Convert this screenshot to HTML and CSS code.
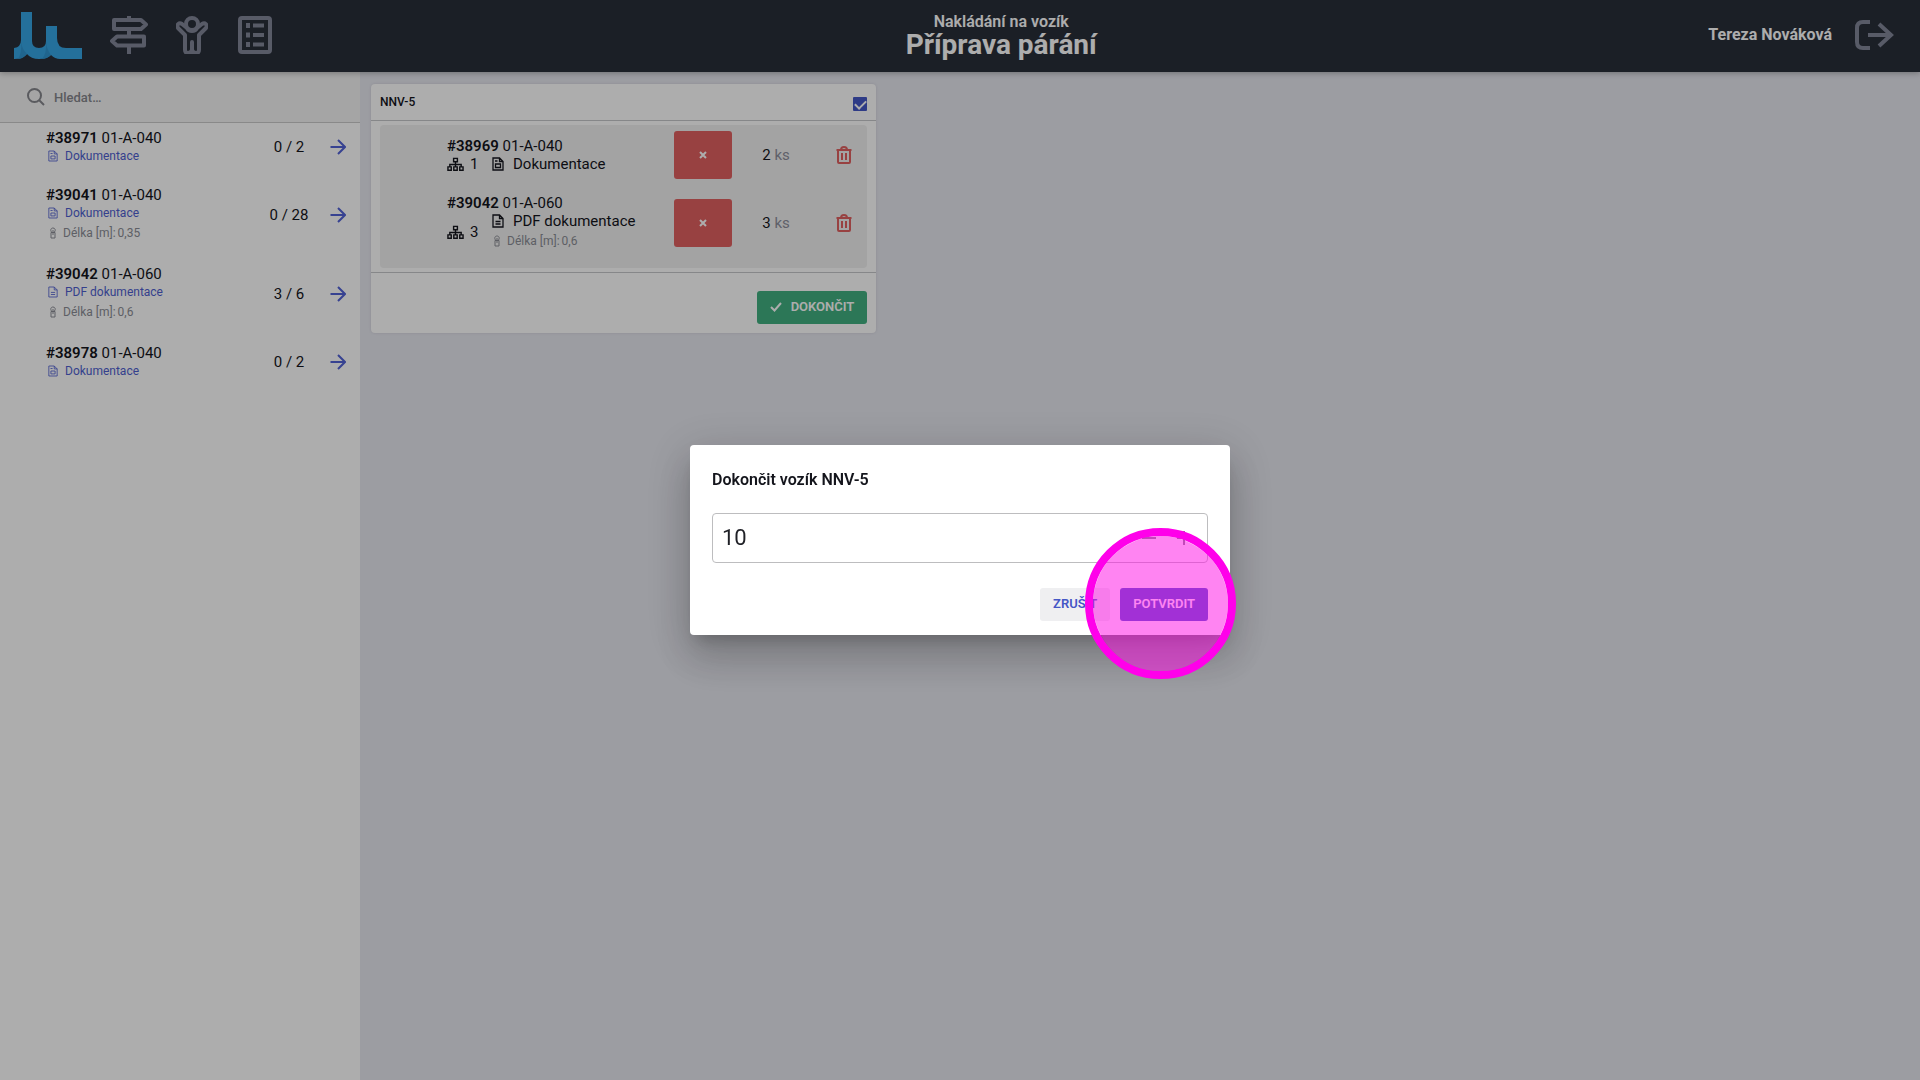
FILE: index.html
```html
<!DOCTYPE html>
<html lang="cs">
<head>
    <meta charset="UTF-8">
    <meta name="viewport" content="width=device-width, initial-scale=1.0">
    <title>Příprava párání</title>

    <link rel="stylesheet" href="styles.css">
</head>
<body>
    <!-- shared icons -->
    <svg class="sprite" aria-hidden="true">
        <symbol id="i-form" viewBox="0 0 12 14">
            <path d="M1 1h6.500L11 4.500V13H1zM7.500 1v3.500H11M3 4h2.500M3.500 7h5v3.500h-5z"/>
        </symbol>
        <symbol id="i-pdf" viewBox="0 0 12 14">
            <path d="M1 1h6.500L11 4.500V13H1zM7.500 1v3.500H11M3.500 7.500h5M3.500 10h5"/>
        </symbol>
        <symbol id="i-length" viewBox="0 0 8 12">
            <path d="M2.500 5C1 3 2 1 4 1s3 2 1.500 4M2 5.500h4V11H2zM4 3v5"/>
        </symbol>
        <symbol id="i-tree" viewBox="0 0 18 15">
            <path d="M7 1h4v3.500H7zM9 4.500V10M3 10V7.500h12V10M1 10h3.500v3.500H1zM7.200 10h3.600v3.500H7.200zM13.500 10H17v3.500h-3.500z"/>
        </symbol>
        <symbol id="i-arrow" viewBox="0 0 16 16">
            <path d="M0.500 8h14M8 1l7 7-7 7"/>
        </symbol>
        <symbol id="i-trash" viewBox="0 0 16 18">
            <path d="M0.500 4h15M5 4c0-4 6-4 6 0M2 4v12q0 1 1 1h10q1 0 1-1V4M6 7v7M10 7v7"/>
        </symbol>
        <symbol id="i-check" viewBox="0 0 12 10">
            <path d="M1 5l3.500 3.500L11 1"/>
        </symbol>
    </svg>

    <header class="topbar">
        <nav class="topbar__nav">
            <a class="topbar__logo" href="#" aria-label="Domů">
                <svg width="68" height="47" viewBox="0 0 68 47">
                    <path class="logo-base" d="M7 0h11v29q0 7 7 7t7-7V14h11v12q0 10 9 10h16v11H46q-5 0-9-4-4 4-12 4-8 0-12-5-4 5-13 5V36q7-1 7-8z"/>
                    <path class="logo-shade" d="M7 30q1 7 6 12-4 5-9 5 4-6 3-17zM32 30q1 8 5 13-4 4-9 4 5-6 4-17z"/>
                </svg>
            </a>
            <a class="topbar__item" href="#" aria-label="Rozcestník">
                <svg width="38" height="38" viewBox="0 0 38 38">
                    <path d="M4 4h27l5 4.500-5 4.500H4zM34 20.500H7L2 25l5 4.500h27zM19 0v4M19 13v7M19 30v8"/>
                </svg>
            </a>
            <a class="topbar__item" href="#" aria-label="Pracovník">
                <svg width="32" height="38" viewBox="0 0 32 38">
                    <circle cx="16" cy="8" r="6"/>
                    <path d="M11 12L6 8c-3-2-6 1-4 4l7 7v15q0 3 3 3t4-3v-8 8q1 3 4 3t3-3V19l7-7c2-3-1-6-4-4l-5 4c-2 4-8 4-10 0"/>
                </svg>
            </a>
            <a class="topbar__item" href="#" aria-label="Seznam">
                <svg width="34" height="38" viewBox="0 0 34 38">
                    <rect x="2" y="2" width="30" height="34" rx="2"/>
                    <path d="M15 9.500h11M15 19h11M15 28.500h11"/>
                    <path class="dots" d="M8 9.500h4M8 19h4M8 28.500h4"/>
                </svg>
            </a>
        </nav>
        <div class="topbar__title">
            <p>Nakládání na vozík</p>
            <h1>Příprava párání</h1>
        </div>
        <div class="topbar__user">
            <span>Tereza Nováková</span>
            <button class="topbar__logout" aria-label="Odhlásit">
                <svg width="39" height="30" viewBox="0 0 39 30">
                    <path d="M15 2H8Q2 2 2 8v14q0 6 6 6h7M13 15h23M24 4l12 11-12 11"/>
                </svg>
            </button>
        </div>
    </header>

    <div class="layout">
        <aside class="sidebar">
            <label class="search">
                <svg width="18" height="18" viewBox="0 0 18 18"><circle cx="7.500" cy="7.500" r="6.500"/><path d="M12 12l5 5"/></svg>
                <input type="text" placeholder="Hledat…" aria-label="Hledat">
            </label>
            <ul class="orders">
                <li class="order">
                    <div>
                        <p class="name"><b>#38971</b> 01-A-040</p>
                        <a class="doc" href="#"><svg><use href="#i-form"/></svg>Dokumentace</a>
                    </div>
                    <span class="order__count">0 / 2</span>
                    <button class="order__go" aria-label="Přidat"><svg><use href="#i-arrow"/></svg></button>
                </li>
                <li class="order">
                    <div>
                        <p class="name"><b>#39041</b> 01-A-040</p>
                        <a class="doc" href="#"><svg><use href="#i-form"/></svg>Dokumentace</a>
                        <p class="length"><svg><use href="#i-length"/></svg>Délka [m]: <span>0,35</span></p>
                    </div>
                    <span class="order__count">0 / 28</span>
                    <button class="order__go" aria-label="Přidat"><svg><use href="#i-arrow"/></svg></button>
                </li>
                <li class="order">
                    <div>
                        <p class="name"><b>#39042</b> 01-A-060</p>
                        <a class="doc" href="#"><svg><use href="#i-pdf"/></svg>PDF dokumentace</a>
                        <p class="length"><svg><use href="#i-length"/></svg>Délka [m]: <span>0,6</span></p>
                    </div>
                    <span class="order__count">3 / 6</span>
                    <button class="order__go" aria-label="Přidat"><svg><use href="#i-arrow"/></svg></button>
                </li>
                <li class="order">
                    <div>
                        <p class="name"><b>#38978</b> 01-A-040</p>
                        <a class="doc" href="#"><svg><use href="#i-form"/></svg>Dokumentace</a>
                    </div>
                    <span class="order__count">0 / 2</span>
                    <button class="order__go" aria-label="Přidat"><svg><use href="#i-arrow"/></svg></button>
                </li>
            </ul>
        </aside>

        <main class="carts">
            <section class="cart">
                <div class="cart__head">
                    <label for="cart5">NNV-5</label>
                    <input type="checkbox" id="cart5" checked>
                </div>
                <div class="cart__body">
                    <ul class="cart__list">
                        <li class="piece">
                            <div>
                                <p class="name"><b>#38969</b> 01-A-040</p>
                                <div class="piece__info">
                                    <span class="piece__tree"><svg><use href="#i-tree"/></svg>1</span>
                                    <div>
                                        <a class="doc doc--big" href="#"><svg><use href="#i-form"/></svg>Dokumentace</a>
                                    </div>
                                </div>
                            </div>
                            <button class="piece__x" aria-label="Zrušit kus"><svg width="8" height="8" viewBox="0 0 8 8"><path d="M1 1l6 6M7 1l-6 6"/></svg></button>
                            <span class="piece__count">2 <small>ks</small></span>
                            <button class="piece__trash" aria-label="Smazat"><svg><use href="#i-trash"/></svg></button>
                        </li>
                        <li class="piece">
                            <div>
                                <p class="name"><b>#39042</b> 01-A-060</p>
                                <div class="piece__info">
                                    <span class="piece__tree"><svg><use href="#i-tree"/></svg>3</span>
                                    <div>
                                        <a class="doc doc--big" href="#"><svg><use href="#i-pdf"/></svg>PDF dokumentace</a>
                                        <p class="length"><svg><use href="#i-length"/></svg>Délka [m]: <span>0,6</span></p>
                                    </div>
                                </div>
                            </div>
                            <button class="piece__x" aria-label="Zrušit kus"><svg width="8" height="8" viewBox="0 0 8 8"><path d="M1 1l6 6M7 1l-6 6"/></svg></button>
                            <span class="piece__count">3 <small>ks</small></span>
                            <button class="piece__trash" aria-label="Smazat"><svg><use href="#i-trash"/></svg></button>
                        </li>
                    </ul>
                </div>
                <div class="cart__foot">
                    <button class="btn btn--green"><svg><use href="#i-check"/></svg>Dokončit</button>
                </div>
            </section>
        </main>
    </div>

    <div class="overlay">
        <form class="dialog" role="dialog" aria-labelledby="dialog-title">
            <h2 id="dialog-title">Dokončit vozík NNV-5</h2>
            <div class="stepper">
                <input type="text" id="count" value="10" inputmode="numeric" aria-label="Počet">
                <button type="button" id="minus" aria-label="Ubrat"><svg width="14" height="14" viewBox="0 0 14 14"><path d="M0 7h14"/></svg></button>
                <button type="button" id="plus" aria-label="Přidat"><svg width="14" height="14" viewBox="0 0 14 14"><path d="M0 7h14M7 0v14"/></svg></button>
            </div>
            <div class="dialog__actions">
                <button type="button" class="btn btn--light">Zrušit</button>
                <button type="button" class="btn btn--blue">Potvrdit</button>
            </div>
            <span class="pointer"></span>
        </form>
    </div>

    <script>
        let count = document.getElementById("count");

        document.getElementById("minus").addEventListener("click", () => {
            count.value = Math.max(0, parseInt(count.value, 10) - 1);
        });
        document.getElementById("plus").addEventListener("click", () => {
            count.value = parseInt(count.value, 10) + 1;
        });
    </script>
</body>
</html>
```
FILE: styles.css
```css
* {
    box-sizing: border-box;
}

body {
    margin: 0;
    min-height: 100vh;
    display: flex;
    flex-direction: column;
    background-color: #e6e7ef;
    color: #14151c;
    font-family: Roboto, Arial, sans-serif;
    font-size: 15px;
    line-height: 18px;
}

p, h1, h2, ul {
    margin: 0;
    padding: 0;
}

ul {
    list-style: none;
}

b {
    font-weight: 600;
}

a {
    text-decoration: none;
}

button {
    padding: 0;
    border: none;
    background: none;
    font-family: inherit;
    cursor: pointer;
}

svg {
    display: block;
    flex: none;
    fill: none;
    stroke: currentColor;
}

.sprite {
    display: none;
}

/* top bar */
.topbar {
    height: 72px;
    padding: 0 26px 2px 14px;
    display: flex;
    align-items: center;
    justify-content: space-between;
    background-color: #282e39;
    color: white;
    box-shadow: 0 1px 6px rgba(0, 0, 0, 0.3);
    position: relative;
}

.topbar__nav {
    display: flex;
    align-items: center;
    margin-right: 8px;
}

.topbar__logo {
    margin-right: 15px;
}

.topbar__logo svg {
    stroke: none;
}

.logo-base {
    fill: #36a5e5;
}

.logo-shade {
    fill: #3096d1;
}

.topbar__item {
    width: 63px;
    display: flex;
    justify-content: center;
    color: #828698;
}

.topbar__item svg {
    stroke-width: 4;
    stroke-linejoin: round;
}

.topbar__item .dots {
    stroke-width: 5;
}

.topbar__title {
    padding-top: 2px;
    text-align: center;
}

.topbar__title p {
    font-size: 16px;
    font-weight: 600;
    line-height: 18px;
}

.topbar__title h1 {
    font-size: 28px;
    font-weight: 700;
    line-height: 28px;
}

.topbar__user {
    display: flex;
    align-items: center;
    gap: 23px;
    font-size: 16px;
    font-weight: 700;
}

.topbar__logout {
    color: #828698;
}

.topbar__logout svg {
    stroke-width: 4;
}

/* left column */
.layout {
    flex: 1;
    display: flex;
}

.sidebar {
    width: 360px;
    background-color: white;
}

.search {
    height: 51px;
    padding-left: 27px;
    display: flex;
    align-items: center;
    gap: 9px;
    background-color: #f3f3f3;
    border-bottom: 1px solid #cacaca;
    color: #85868c;
}

.search svg {
    stroke-width: 2;
}

.search input {
    flex: 1;
    min-width: 0;
    padding: 0;
    border: none;
    outline: none;
    background: none;
    font-family: inherit;
    font-size: 13px;
    font-weight: 500;
}

.search input::placeholder {
    color: #85868c;
    opacity: 1;
}

.orders {
    padding: 6px 14px 0 46px;
    display: flex;
    flex-direction: column;
    gap: 21px;
}

.order {
    display: grid;
    grid-template-columns: 1fr 74px 20px;
    align-items: center;
}

.order__count {
    text-align: center;
}

.order__go {
    display: flex;
    justify-content: flex-end;
    color: #5162d6;
}

.order__go svg {
    width: 16px;
    height: 16px;
    stroke-width: 2;
}

.doc {
    display: flex;
    align-items: center;
    gap: 7px;
    padding-left: 2px;
    color: #4f5fd0;
    font-size: 12px;
}

.doc svg {
    width: 10px;
    height: 12px;
}

.doc--big {
    gap: 9px;
    padding-left: 0;
    color: inherit;
    font-size: 15px;
}

.doc--big svg {
    width: 12px;
    height: 14px;
    stroke-width: 1.3;
}

.length {
    display: flex;
    align-items: center;
    padding-left: 3px;
    color: #8b8d95;
    font-size: 12px;
    line-height: 22px;
}

.length svg {
    width: 8px;
    height: 12px;
    margin-right: 6px;
}

.length span {
    margin-left: 2px;
}

.doc--big + .length {
    padding-left: 1px;
}

/* carts */
.carts {
    flex: 1;
    padding: 12px 11px;
    display: grid;
    grid-template-columns: repeat(3, 1fr);
    gap: 11px;
    align-items: start;
}

.cart {
    background-color: white;
    border-radius: 4px;
    box-shadow: 0 0 3px rgba(0, 0, 0, 0.1);
}

.cart__head {
    height: 36px;
    padding: 0 9px;
    display: flex;
    align-items: center;
    justify-content: space-between;
    font-size: 12px;
    font-weight: 500;
}

.cart__head input {
    appearance: none;
    width: 14px;
    height: 14px;
    margin: 4px 0 0;
    display: grid;
    place-items: center;
    border-radius: 1px;
    background-color: #4557c6;
}

.cart__head input:checked::before {
    content: "";
    width: 9px;
    height: 5px;
    border-left: 2px solid white;
    border-bottom: 2px solid white;
    transform: translateY(-1px) rotate(-45deg);
}

.cart__body {
    padding: 4px 9px;
    border-top: 1px solid #c6c7cb;
    border-bottom: 1px solid #c6c7cb;
}

.cart__list {
    padding: 6px 0 16px 67px;
    display: flex;
    flex-direction: column;
    gap: 15px;
    background-color: #f0f0f0;
    border-radius: 4px;
}

.piece {
    display: grid;
    grid-template-columns: 1fr 58px 90px 45px;
    align-items: center;
}

.piece__info {
    display: flex;
    align-items: center;
}

.piece__tree {
    width: 45px;
    display: flex;
    align-items: center;
    gap: 6px;
}

.piece__tree svg {
    width: 17px;
    height: 15px;
    stroke-width: 1.5;
}

.piece__x {
    height: 48px;
    display: grid;
    place-items: center;
    border-radius: 3px;
    background-color: #e06161;
    color: white;
}

.piece__x svg {
    stroke-width: 2;
}

.piece__count {
    padding-left: 30px;
}

.piece__count small {
    color: #8d8e9c;
    font-size: 15px;
}

.piece__trash {
    padding-left: 14px;
    color: #e06161;
}

.piece__trash svg {
    width: 16px;
    height: 18px;
    stroke-width: 2;
}

.cart__foot {
    padding: 18px 9px 9px;
    display: flex;
    justify-content: flex-end;
}

.btn {
    height: 33px;
    padding: 0 13px 2px;
    display: flex;
    align-items: center;
    border-radius: 3px;
    font-size: 13px;
    font-weight: 600;
    text-transform: uppercase;
}

.btn svg {
    width: 12px;
    height: 10px;
    margin-right: 9px;
    stroke-width: 2;
}

.btn--green {
    background-color: #41b080;
    color: white;
}

.btn--light {
    background-color: #efeff1;
    color: #4557c6;
}

.btn--blue {
    background-color: #4557c6;
    color: white;
}

/* dialog */
.overlay {
    position: fixed;
    inset: 0;
    display: grid;
    place-items: center;
    background-color: rgba(0, 0, 0, 0.32);
}

.dialog {
    width: 540px;
    padding: 23px 22px 14px;
    position: relative;
    background-color: white;
    border-radius: 4px;
    box-shadow: 0 11px 15px -7px rgba(0, 0, 0, 0.2), 0 24px 38px 3px rgba(0, 0, 0, 0.14), 0 9px 46px 8px rgba(0, 0, 0, 0.12);
}

.dialog h2 {
    font-size: 16px;
    font-weight: 600;
    line-height: 24px;
}

.stepper {
    height: 50px;
    margin: 21px 0 25px;
    padding: 0 6px 2px 9px;
    display: flex;
    align-items: center;
    border: 1px solid #bdbdbf;
    border-radius: 4px;
}

.stepper input {
    flex: 1;
    min-width: 0;
    padding: 0;
    border: none;
    outline: none;
    color: #1f2026;
    font-family: inherit;
    font-size: 22px;
}

.stepper button {
    width: 35px;
    height: 35px;
    display: grid;
    place-items: center;
    color: #85868c;
}

.stepper svg {
    margin-top: 2px;
    stroke-width: 2;
}

.dialog__actions {
    display: flex;
    justify-content: flex-end;
    gap: 10px;
}

/* click highlight over the confirm button */
.pointer {
    position: absolute;
    right: -6px;
    bottom: -44px;
    width: 151px;
    height: 151px;
    border: 8px solid #ff00ea;
    border-radius: 50%;
    background-color: rgba(255, 10, 230, 0.5);
    background-clip: padding-box;
    pointer-events: none;
}
```
